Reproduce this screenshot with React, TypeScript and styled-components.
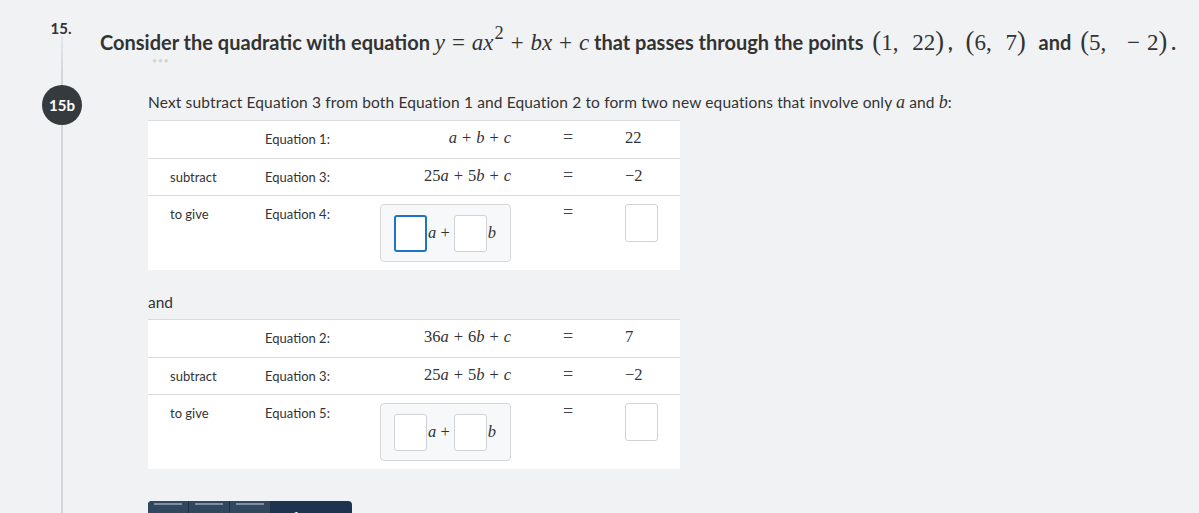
import React from "react";
import styled, { createGlobalStyle } from "styled-components";

const GlobalStyle = createGlobalStyle`
  html, body {
    margin: 0;
    padding: 0;
    background: #f1f2f4;
  }
  body {
    font-family: "Lato", "Liberation Sans", sans-serif;
    color: #333;
  }
`;

const Page = styled.div`
  height: 513px;
  overflow: hidden;
  padding: 20px 0 0 38px;
  box-sizing: border-box;
  background:
    linear-gradient(#e6e7ea, #d3d5d8 40px, #d3d5d8) no-repeat 61px 36px / 2px 100%,
    #f1f2f4;
`;

const Question = styled.div`
  display: grid;
  grid-template-columns: 48px 1fr;
  column-gap: 14px;
  align-items: start;
`;

const Number = styled.div`
  justify-self: center;
  font-size: 15px;
  font-weight: 700;
  line-height: 16px;
  margin-left: -2px;
`;

const Title = styled.h2`
  margin: 7px 0 0;
  height: 30px;
  font-size: 20px;
  font-weight: 700;
  line-height: 30px;
  color: #333;
  white-space: nowrap;
`;

const Dots = styled.div`
  grid-column: 2;
  margin: 0 0 0 52px;
  height: 14px;
  color: #d2d4d7;
  font-size: 9px;
  line-height: 8px;
  letter-spacing: 0.5px;
`;

const Badge = styled.div`
  width: 40px;
  height: 40px;
  border-radius: 50%;
  background: #353a3f;
  color: #fff;
  font-size: 15px;
  font-weight: 700;
  display: flex;
  align-items: center;
  justify-content: center;
  justify-self: center;
  margin-top: 14px;
`;

const Body = styled.div`
  padding-left: 48px;
  padding-top: 20px;
`;

const Lead = styled.p`
  margin: 0 0 7px;
  font-size: 15.5px;
  line-height: 22px;
  letter-spacing: 0.14px;
  white-space: nowrap;
`;

const Math = styled.span<{ $size?: number; $space?: number }>`
  font-family: "Liberation Serif", "DejaVu Serif", serif;
  font-weight: 400;
  font-size: ${(p) => p.$size ?? 18}px;
  line-height: 1;
  letter-spacing: 0;
  white-space: nowrap;
  margin: 0 ${(p) => p.$space ?? 0}px;
`;

const V = styled.i`
  font-style: italic;
`;

const Op = styled.span`
  margin: 0 0.3em;
`;

const Big = styled.span`
  font-size: 1.15em;
`;

const Gap = styled.span`
  display: inline-block;
  width: 0.6em;
`;

const Sup = styled.sup`
  font-size: 0.8em;
  vertical-align: 0.6em;
  line-height: 0;
  margin-left: 1px;
`;

const Table = styled.div`
  width: 532px;
  background: #fff;
  border-top: 1px solid #dadbdd;
`;

const Row = styled.div<{ $tall?: boolean }>`
  display: grid;
  grid-template-columns: 95px 115px 131px 114px 1fr;
  padding-left: 22px;
  height: ${(p) => (p.$tall ? 75 : 37)}px;
  box-sizing: border-box;
  align-items: start;
  font-size: 13px;
  & + & {
    border-top: 1px solid #dadbdd;
  }
`;

const Cell = styled.div`
  padding-top: 10px;
  line-height: 16px;
  color: #333;
`;

const Expr = styled(Cell)`
  text-align: right;
  font-family: "Liberation Serif", "DejaVu Serif", serif;
  font-size: 16.5px;
  padding-top: 9px;
`;

const Equals = styled(Cell)`
  text-align: center;
  font-family: "Liberation Serif", "DejaVu Serif", serif;
  font-size: 18px;
  padding-top: 8px;
  color: #444;
`;

const Value = styled(Cell)`
  font-family: "Liberation Serif", "DejaVu Serif", serif;
  font-size: 16.5px;
  padding-top: 9px;
`;

const Group = styled.div`
  margin-top: 8px;
  height: 58px;
  box-sizing: border-box;
  border: 1px solid #d6d7d9;
  border-radius: 4px;
  background: #f7f8fa;
  display: flex;
  align-items: center;
  padding: 0 6px 0 13px;
  font-family: "Liberation Serif", "DejaVu Serif", serif;
  font-size: 16.5px;
  white-space: nowrap;
`;

const Box = styled.div<{ $focus?: boolean }>`
  flex: none;
  width: 33px;
  height: 37px;
  box-sizing: border-box;
  border-radius: 3px;
  background: #fff;
  border: ${(p) => (p.$focus ? "2px solid #1e74c6" : "1px solid #d0d2d5")};
`;

const ValueBox = styled(Box)`
  margin-top: 8px;
  height: 38px;
`;

const Joiner = styled.span`
  flex: none;
  margin: 0 4px 0 1px;
`;

const And = styled.p`
  margin: 22px 0 0;
  font-size: 15.5px;
  line-height: 20px;
  height: 27px;
`;

const Toolbar = styled.div`
  margin-top: 32px;
  width: 204px;
  height: 20px;
  border-radius: 4px 4px 0 0;
  overflow: hidden;
  display: flex;
  background: #1c3450;
`;

const Tab = styled.div`
  width: 40px;
  background: #30475f;
  border-right: 1px solid #1f3047;
  &::before {
    content: "";
    display: block;
    margin: 2px 6px 0;
    height: 2px;
    background: #7f90a4;
  }
`;

const ToolLabel = styled.div`
  flex: 1;
  color: #fff;
  font-size: 13px;
  padding: 8px 0 0 22px;
`;

type RowData = {
  lead: string;
  label: string;
  expr: React.ReactNode;
  value: string;
};

function Equation({ rows, result, focus }: { rows: RowData[]; result: string; focus?: boolean }) {
  return (
    <Table>
      {rows.map((r) => (
        <Row key={r.label}>
          <Cell>{r.lead}</Cell>
          <Cell>{r.label}</Cell>
          <Expr>{r.expr}</Expr>
          <Equals>=</Equals>
          <Value>{r.value}</Value>
        </Row>
      ))}
      <Row $tall>
        <Cell>to give</Cell>
        <Cell>{result}</Cell>
        <Group>
          <Box $focus={focus} />
          <Joiner>
            <V>a</V> +
          </Joiner>
          <Box />
          <Joiner>
            <V>b</V>
          </Joiner>
        </Group>
        <Equals>=</Equals>
        <div>
          <ValueBox />
        </div>
      </Row>
    </Table>
  );
}

const plus = <Op>+</Op>;

export default function App() {
  const first: RowData[] = [
    { lead: "", label: "Equation 1:", expr: <><V>a</V>{plus}<V>b</V>{plus}<V>c</V></>, value: "22" },
    { lead: "subtract", label: "Equation 3:", expr: <>25<V>a</V>{plus}5<V>b</V>{plus}<V>c</V></>, value: "−2" },
  ];
  const second: RowData[] = [
    { lead: "", label: "Equation 2:", expr: <>36<V>a</V>{plus}6<V>b</V>{plus}<V>c</V></>, value: "7" },
    { lead: "subtract", label: "Equation 3:", expr: <>25<V>a</V>{plus}5<V>b</V>{plus}<V>c</V></>, value: "−2" },
  ];

  return (
    <>
      <GlobalStyle />
      <Page>
        <Question>
          <Number>15.</Number>
          <Title>
            Consider the quadratic with equation{" "}
            <Math $size={23}>
              <V>y</V>
              <Op>=</Op>
              <V>ax</V>
              <Sup>2</Sup>
              <Op>+</Op>
              <V>bx</V>
              <Op>+</Op>
              <V>c</V>
            </Math>{" "}
            that passes through the points{" "}
            <Math $size={23} $space={4}>
              <Big>(</Big>1,<Gap />22<Big>)</Big>
            </Math>
            ,{" "}
            <Math $size={23} $space={8}>
              <Big>(</Big>6,<Gap />7<Big>)</Big>
            </Math>{" "}
            and{" "}
            <Math $size={23} $space={4}>
              <Big>(</Big>5,<Gap /><Op>−</Op>2<Big>)</Big>
            </Math>
            .
          </Title>
          <Dots>•••</Dots>
          <Badge>15b</Badge>
          <Body>
            <Lead>
              Next subtract Equation 3 from both Equation 1 and Equation 2 to form two new equations that
              involve only{" "}
              <Math>
                <V>a</V>
              </Math>{" "}
              and{" "}
              <Math>
                <V>b</V>
              </Math>
              :
            </Lead>
            <Equation rows={first} result="Equation 4:" focus />
            <And>and</And>
            <Equation rows={second} result="Equation 5:" />
            <Toolbar>
              <Tab />
              <Tab />
              <Tab />
              <ToolLabel>f</ToolLabel>
            </Toolbar>
          </Body>
        </Question>
      </Page>
    </>
  );
}
